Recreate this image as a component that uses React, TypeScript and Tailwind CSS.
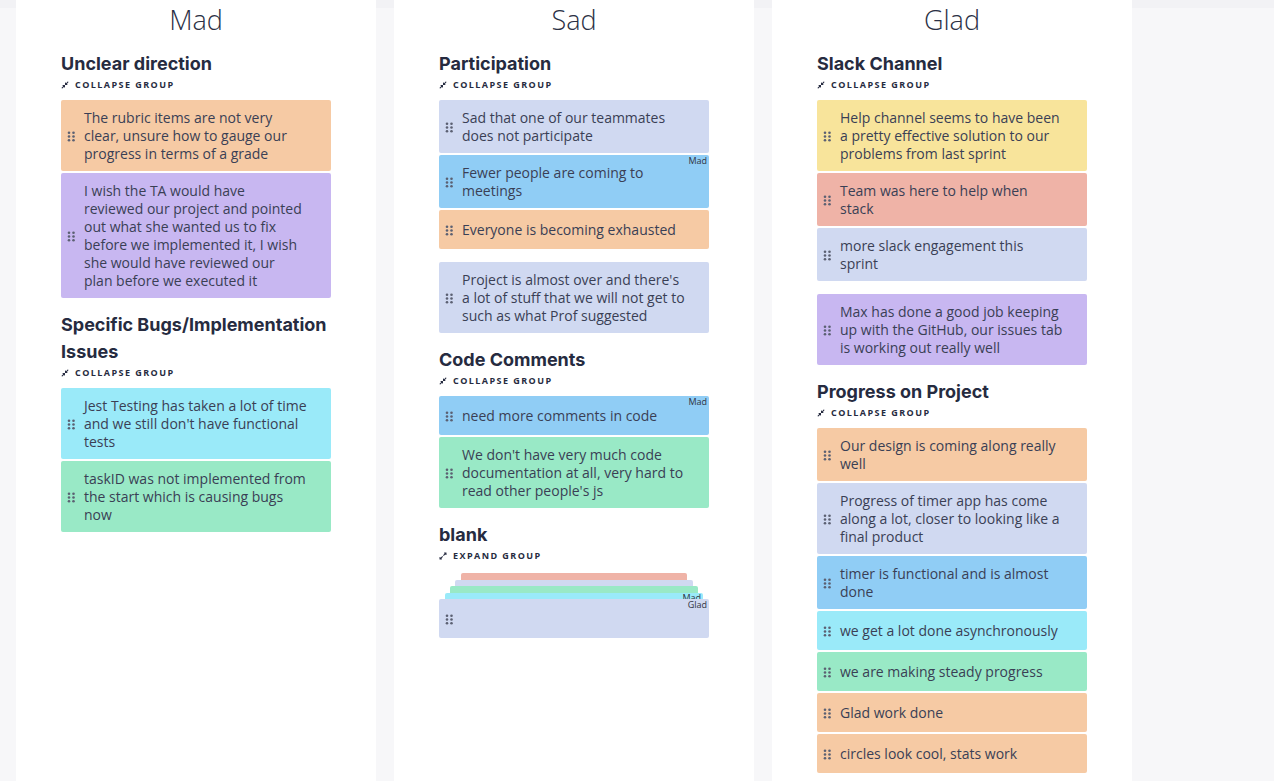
import { FaCompressAlt, FaExpandAlt } from 'react-icons/fa'

type Tone = 'peach' | 'purple' | 'cyan' | 'green' | 'lavender' | 'blue' | 'yellow' | 'salmon'

interface Note {
  text: string
  tone: Tone
  tag?: string
}

type Block =
  | { kind: 'group'; title: string; notes: Note[] }
  | { kind: 'note'; note: Note }
  | { kind: 'collapsed'; title: string; layers: Tone[]; layerTag?: string; top: Note }

const toneBg: Record<Tone, string> = {
  peach: 'bg-[#f6caa4]',
  purple: 'bg-[#c8b7f1]',
  cyan: 'bg-[#9aeaf9]',
  green: 'bg-[#99e9c6]',
  lavender: 'bg-[#d0d9f1]',
  blue: 'bg-[#90cdf5]',
  yellow: 'bg-[#f8e49b]',
  salmon: 'bg-[#efb3a7]',
}

// line breaks follow the board's own wrapping
const columns: { name: string; blocks: Block[] }[] = [
  {
    name: 'Mad',
    blocks: [
      {
        kind: 'group',
        title: 'Unclear direction',
        notes: [
          { tone: 'peach', text: 'The rubric items are not very\nclear, unsure how to gauge our\nprogress in terms of a grade' },
          {
            tone: 'purple',
            text: 'I wish the TA would have\nreviewed our project and pointed\nout what she wanted us to fix\nbefore we implemented it, I wish\nshe would have reviewed our\nplan before we executed it',
          },
        ],
      },
      {
        kind: 'group',
        title: 'Specific Bugs/Implementation Issues',
        notes: [
          { tone: 'cyan', text: "Jest Testing has taken a lot of time\nand we still don't have functional\ntests" },
          { tone: 'green', text: 'taskID was not implemented from\nthe start which is causing bugs\nnow' },
        ],
      },
    ],
  },
  {
    name: 'Sad',
    blocks: [
      {
        kind: 'group',
        title: 'Participation',
        notes: [
          { tone: 'lavender', text: 'Sad that one of our teammates\ndoes not participate' },
          { tone: 'blue', text: 'Fewer people are coming to\nmeetings', tag: 'Mad' },
          { tone: 'peach', text: 'Everyone is becoming exhausted' },
        ],
      },
      {
        kind: 'note',
        note: { tone: 'lavender', text: "Project is almost over and there's\na lot of stuff that we will not get to\nsuch as what Prof suggested" },
      },
      {
        kind: 'group',
        title: 'Code Comments',
        notes: [
          { tone: 'blue', text: 'need more comments in code', tag: 'Mad' },
          { tone: 'green', text: "We don't have very much code\ndocumentation at all, very hard to\nread other people's js" },
        ],
      },
      {
        kind: 'collapsed',
        title: 'blank',
        layers: ['salmon', 'lavender', 'green', 'cyan'],
        layerTag: 'Mad',
        top: { tone: 'lavender', text: '', tag: 'Glad' },
      },
    ],
  },
  {
    name: 'Glad',
    blocks: [
      {
        kind: 'group',
        title: 'Slack Channel',
        notes: [
          { tone: 'yellow', text: 'Help channel seems to have been\na pretty effective solution to our\nproblems from last sprint' },
          { tone: 'salmon', text: 'Team was here to help when\nstack' },
          { tone: 'lavender', text: 'more slack engagement this\nsprint' },
        ],
      },
      {
        kind: 'note',
        note: { tone: 'purple', text: 'Max has done a good job keeping\nup with the GitHub, our issues tab\nis working out really well' },
      },
      {
        kind: 'group',
        title: 'Progress on Project',
        notes: [
          { tone: 'peach', text: 'Our design is coming along really\nwell' },
          { tone: 'lavender', text: 'Progress of timer app has come\nalong a lot, closer to looking like a\nfinal product' },
          { tone: 'blue', text: 'timer is functional and is almost\ndone' },
          { tone: 'cyan', text: 'we get a lot done asynchronously' },
          { tone: 'green', text: 'we are making steady progress' },
          { tone: 'peach', text: 'Glad work done' },
          { tone: 'peach', text: 'circles look cool, stats work' },
        ],
      },
    ],
  },
]

// layer insets for the collapsed stack, top-most first
const layerInset = ['mx-[22px]', 'mx-[16px]', 'mx-[11px]', 'mx-[6px]']

function DragHandle() {
  return (
    <svg width="9" height="11" viewBox="0 0 9 11" className="shrink-0 text-[#5b6072]" fill="currentColor">
      <circle cx="2" cy="1.8" r="1.3" />
      <circle cx="6.5" cy="1.8" r="1.3" />
      <circle cx="2" cy="5.5" r="1.3" />
      <circle cx="6.5" cy="5.5" r="1.3" />
      <circle cx="2" cy="9.2" r="1.3" />
      <circle cx="6.5" cy="9.2" r="1.3" />
    </svg>
  )
}

function NoteCard({ note }: { note: Note }) {
  return (
    <div className={`relative flex min-h-[39px] items-center rounded-[2px] pb-[8px] pt-[9px] pl-[6px] pr-[10px] ${toneBg[note.tone]}`}>
      <DragHandle />
      <p className="ml-[8px] whitespace-pre-line text-[14px] leading-[18px] text-[#3a3f55]">{note.text}</p>
      {note.tag && (
        <span className="absolute right-[2px] top-[1px] text-[9px] leading-[10px] text-[#2f3340]">{note.tag}</span>
      )}
    </div>
  )
}

function GroupHeader({ title, expand }: { title: string; expand?: boolean }) {
  return (
    <div>
      <h3 className="font-['Inter',sans-serif] text-[18px] font-bold leading-[27px] text-[#262b40]">{title}</h3>
      <button className="mt-[1px] flex h-[14px] items-center gap-[6px] text-[#262b40]">
        {expand ? <FaExpandAlt className="h-[8px] w-[8px]" /> : <FaCompressAlt className="h-[8px] w-[8px]" />}
        <span className="text-[9px] font-bold uppercase tracking-[0.16em]">{expand ? 'Expand group' : 'Collapse group'}</span>
      </button>
    </div>
  )
}

function BlockView({ block }: { block: Block }) {
  if (block.kind === 'note') return <NoteCard note={block.note} />

  if (block.kind === 'collapsed') {
    return (
      <div>
        <GroupHeader title={block.title} expand />
        <div className="mt-[10px] flex flex-col">
          {block.layers.map((tone, i) => (
            <div key={i} className={`relative h-[6.5px] rounded-t-[2px] ${layerInset[i]} ${toneBg[tone]}`}>
              {i === block.layers.length - 1 && block.layerTag && (
                <span className="absolute right-[2px] top-[0px] text-[9px] leading-[10px] text-[#2f3340]">{block.layerTag}</span>
              )}
            </div>
          ))}
          <div className="relative z-10">
            <NoteCard note={block.top} />
          </div>
        </div>
      </div>
    )
  }

  return (
    <div>
      <GroupHeader title={block.title} />
      <div className="mt-[8px] flex flex-col gap-[2px]">
        {block.notes.map((n, i) => (
          <NoteCard key={i} note={n} />
        ))}
      </div>
    </div>
  )
}

export default function App() {
  return (
    <div className="min-h-screen bg-[linear-gradient(to_bottom,#f2f2f5_8px,#f7f7f9_8px)] font-['Open_Sans',sans-serif]">
      <div className="flex min-h-screen gap-[18px] px-[16px]">
        {columns.map((col) => (
          <section key={col.name} className="w-[360px] shrink-0 bg-white pb-10">
            <h2 className="flex h-[40px] items-center justify-center text-[27px] font-light text-[#2b3045]">{col.name}</h2>
            <div className="flex flex-col gap-[13px] px-[45px] pt-[10px]">
              {col.blocks.map((b, i) => (
                <BlockView key={i} block={b} />
              ))}
            </div>
          </section>
        ))}
      </div>
    </div>
  )
}
